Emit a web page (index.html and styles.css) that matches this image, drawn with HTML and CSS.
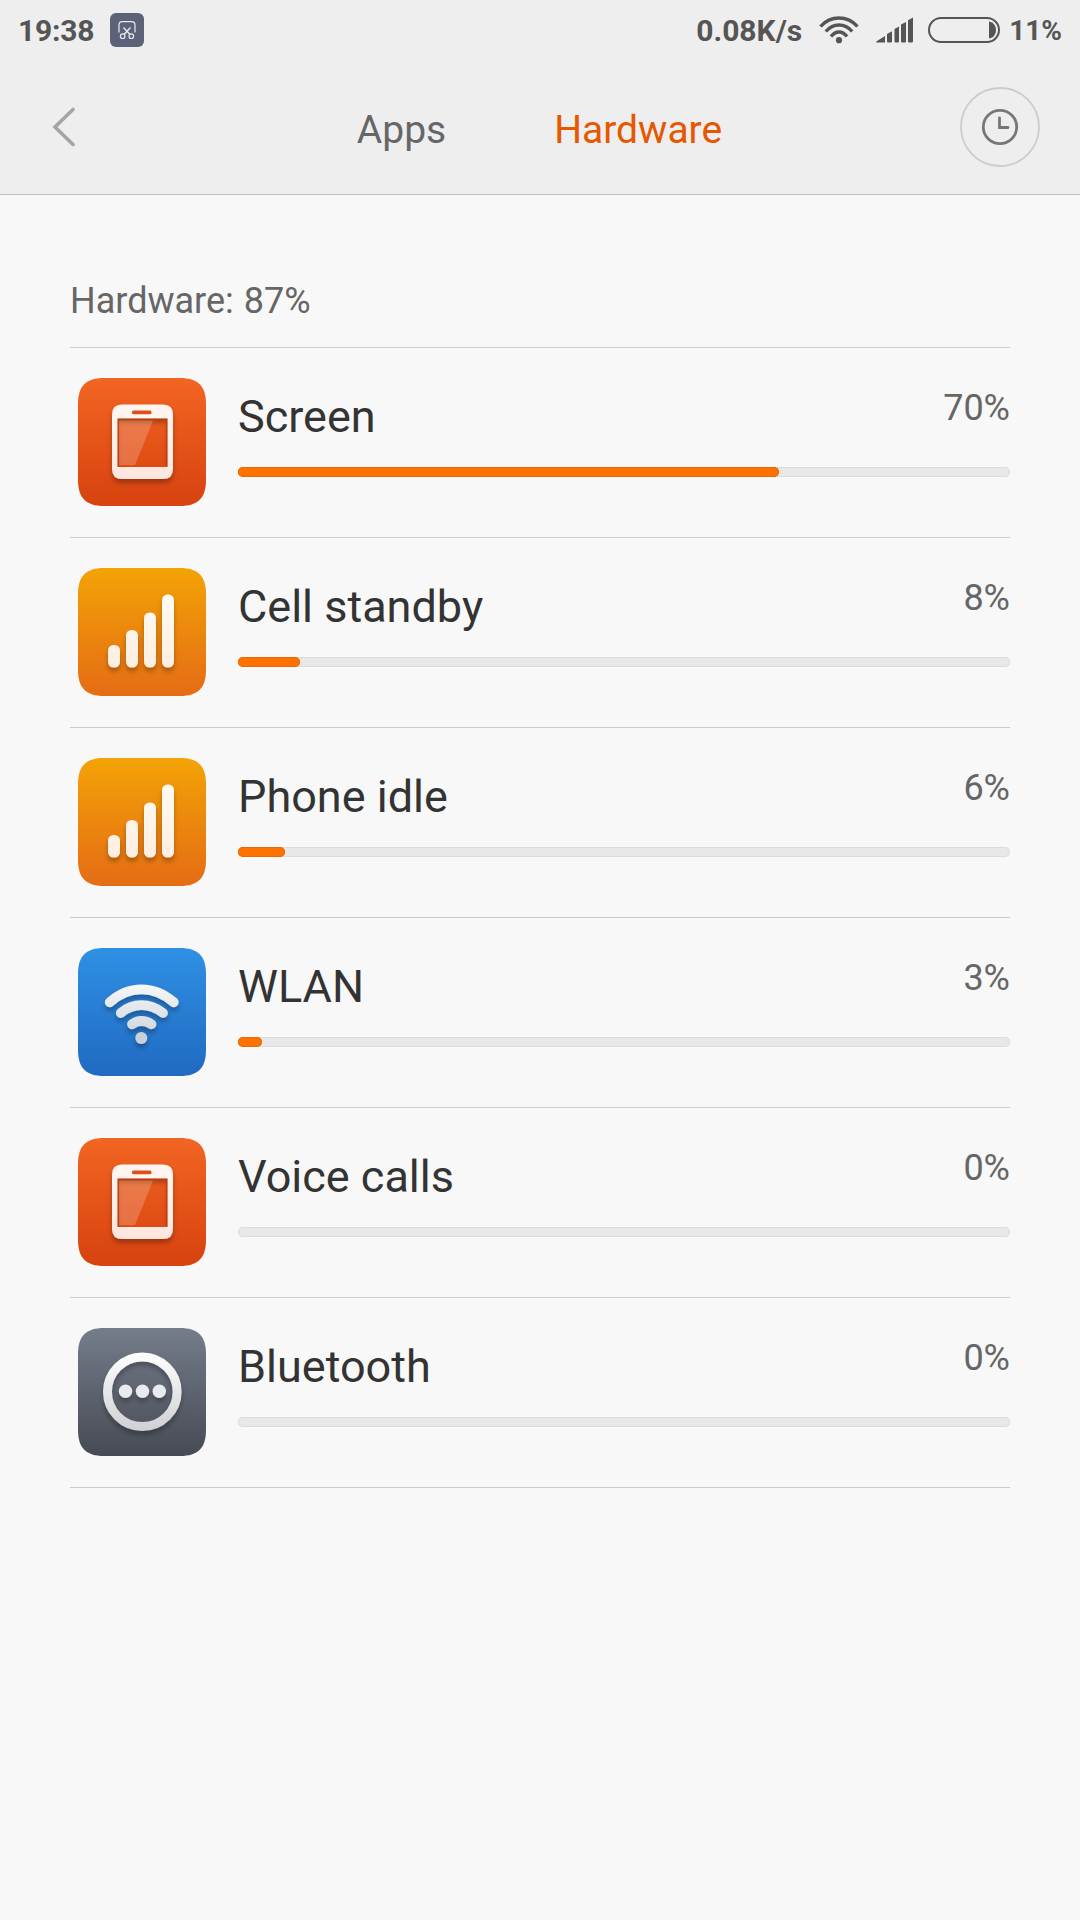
FILE: index.html
```html
<!DOCTYPE html>
<html lang="en">
<head>
    <meta charset="UTF-8">
    <title>Hardware</title>
    <link rel="stylesheet" href="styles.css">
</head>
<body>
    <!-- shared icon parts -->
    <svg class="defs" width="0" height="0">
        <defs>
            <linearGradient id="red" x1="0" y1="0" x2="0" y2="1"><stop offset="0" stop-color="#f26522"/><stop offset="1" stop-color="#d7420f"/></linearGradient>
            <linearGradient id="yellow" x1="0" y1="0" x2="0" y2="1"><stop offset="0" stop-color="#f3a306"/><stop offset="1" stop-color="#e56c15"/></linearGradient>
            <linearGradient id="blue" x1="0" y1="0" x2="0" y2="1"><stop offset="0" stop-color="#2f90e3"/><stop offset="1" stop-color="#206ac3"/></linearGradient>
            <linearGradient id="gray" x1="0" y1="0" x2="0" y2="1"><stop offset="0" stop-color="#757d8b"/><stop offset="1" stop-color="#464a53"/></linearGradient>
            <linearGradient id="phoneFill" x1="0" y1="0" x2="0" y2="1"><stop offset="0" stop-color="#fff6f2"/><stop offset="1" stop-color="#fde6de"/></linearGradient>
            <linearGradient id="barFill" gradientUnits="userSpaceOnUse" x1="0" y1="26" x2="0" y2="100"><stop offset="0" stop-color="#fffaf3"/><stop offset="1" stop-color="#fdeee0"/></linearGradient>
            <linearGradient id="wifiFill" gradientUnits="userSpaceOnUse" x1="0" y1="36" x2="0" y2="96"><stop offset="0" stop-color="#f8f8f8"/><stop offset="1" stop-color="#c6cfd7"/></linearGradient>
            <linearGradient id="ringFill" gradientUnits="userSpaceOnUse" x1="0" y1="24" x2="0" y2="103"><stop offset="0" stop-color="#ffffff"/><stop offset="1" stop-color="#cfd0d3"/></linearGradient>
            <filter id="shadow" x="-30%" y="-30%" width="160%" height="170%"><feDropShadow dx="0" dy="4" stdDeviation="2.5" flood-color="#000" flood-opacity="0.28"/></filter>
            <path id="tile" d="M26 0H102C120 0 128 8 128 26V102C128 120 120 128 102 128H26C8 128 0 120 0 102V26C0 8 8 0 26 0Z"/>
            <g id="phone">
                <use href="#tile" fill="url(#red)"/>
                <path filter="url(#shadow)" fill="url(#phoneFill)" fill-rule="evenodd" d="M44 26.500H85Q95 26.500 95 36.500V91Q95 101 85 101H44Q34 101 34 91V36.500Q34 26.500 44 26.500ZM39.500 40.500V89H89.500V40.500Z"/>
                <rect x="54" y="32.500" width="19.500" height="3.800" rx="1.500" fill="#dc4f1a"/>
                <path fill="none" stroke="#b83a0c" stroke-opacity=".55" stroke-width="1.500" d="M40.300 88.500V41.300H88.800V88.500"/>
                <path fill="#fff" fill-opacity=".2" d="M41 42.500H75L57 87H41Z"/>
            </g>
            <g id="signal">
                <use href="#tile" fill="url(#yellow)"/>
                <g filter="url(#shadow)" fill="url(#barFill)">
                    <rect x="30" y="77" width="12" height="22.500" rx="5.500"/>
                    <rect x="48" y="62" width="12" height="37.500" rx="5.500"/>
                    <rect x="66" y="44.500" width="12" height="55" rx="5.500"/>
                    <rect x="84" y="26.500" width="12" height="73" rx="5.500"/>
                </g>
            </g>
        </defs>
    </svg>

    <div class="header">
        <div class="status">
            <span class="time">19:38</span>
            <svg class="shot" width="34" height="34" viewBox="0 0 34 34">
                <rect width="34" height="34" rx="6" fill="#5c6378"/>
                <g fill="none" stroke="#e8eaf0" stroke-width="1.200">
                    <path d="M9 19.500V12Q9 8.700 12.300 8.700H21.700Q25 8.700 25 12V19.500"/>
                    <path d="M13.500 14.500L20 21.500M20.500 14.500L14 21.500" stroke-width="1.400"/>
                    <circle cx="12.700" cy="23.200" r="2.300"/>
                    <circle cx="21.300" cy="23.200" r="2.300"/>
                </g>
            </svg>
            <span class="speed">0.08K/s</span>
            <svg class="wifi" width="40" height="28" viewBox="0 0 40 28">
                <g fill="none" stroke="#555" stroke-width="3.400">
                    <path d="M1.500 10.500Q9 2 20 2T38.500 10.500"/>
                    <path d="M6.800 15.500Q12.500 9 20 9T33.200 15.500"/>
                    <path d="M12 20.500Q15.500 16 20 16T28 20.500"/>
                </g>
                <circle cx="20" cy="24.200" r="3.100" fill="#555"/>
            </svg>
            <svg class="bars" width="38" height="26" viewBox="0 0 38 26">
                <path fill="#555" d="M0 25.500Q0 24.500 1 24L9 19V25.500H0ZM11 17L16 14.200V24.500Q16 25.500 15 25.500H12Q11 25.500 11 24.500ZM18.500 12L23 9.500V24.500Q23 25.500 22 25.500H19.500Q18.500 25.500 18.500 24.500ZM25 7.500L30 5V24.500Q30 25.500 29 25.500H26Q25 25.500 25 24.500ZM32 3.300L37 .5V24.500Q37 25.500 36 25.500H33Q32 25.500 32 24.500Z"/>
            </svg>
            <svg class="battery" width="72" height="26" viewBox="0 0 72 26">
                <rect x="1" y="1" width="70" height="24" rx="12" fill="none" stroke="#555" stroke-width="2"/>
                <path fill="#555" d="M61 4.500Q68 6 68 13T61 21.500Z"/>
            </svg>
            <span class="level">11%</span>
        </div>
        <div class="nav">
            <svg class="back" width="24" height="40" viewBox="0 0 24 40">
                <path d="M21 2.500L3 20L21 37.500" fill="none" stroke="#a5a5a5" stroke-width="3.600" stroke-linecap="round"/>
            </svg>
            <div class="tabs">
                <span class="tab">Apps</span>
                <span class="tab active">Hardware</span>
            </div>
            <svg class="clock" width="80" height="80" viewBox="0 0 80 80">
                <circle cx="40" cy="40" r="39" fill="none" stroke="#ccc" stroke-width="1.800"/>
                <circle cx="40" cy="40" r="16.700" fill="none" stroke="#777" stroke-width="2.800"/>
                <path d="M39.500 31V40.500H48" fill="none" stroke="#777" stroke-width="2.800" stroke-linecap="round"/>
            </svg>
        </div>
    </div>

    <div class="content">
        <div class="title">Hardware: 87%</div>
        <ul class="list">
            <li>
                <svg class="icon" viewBox="0 0 128 128"><use href="#phone"/></svg>
                <div class="info">
                    <div class="row"><span class="name">Screen</span><span class="percent">70%</span></div>
                    <div class="progress"><div class="fill" style="width: 541px"></div></div>
                </div>
            </li>
            <li>
                <svg class="icon" viewBox="0 0 128 128"><use href="#signal"/></svg>
                <div class="info">
                    <div class="row"><span class="name">Cell standby</span><span class="percent">8%</span></div>
                    <div class="progress"><div class="fill" style="width: 62px"></div></div>
                </div>
            </li>
            <li>
                <svg class="icon" viewBox="0 0 128 128"><use href="#signal"/></svg>
                <div class="info">
                    <div class="row"><span class="name">Phone idle</span><span class="percent">6%</span></div>
                    <div class="progress"><div class="fill" style="width: 47px"></div></div>
                </div>
            </li>
            <li>
                <svg class="icon" viewBox="0 0 128 128">
                    <use href="#tile" fill="url(#blue)"/>
                    <g filter="url(#shadow)">
                        <g fill="none" stroke="url(#wifiFill)" stroke-width="9.800" stroke-linecap="round">
                            <path d="M31.700 54.300Q46 41.300 63.500 41.300T95.800 54.300"/>
                            <path d="M42.800 65Q52 57.200 63.500 57.200T85 65"/>
                            <path d="M54 76.300Q58.500 73 63.500 73T73.500 76.300"/>
                        </g>
                        <circle cx="63.300" cy="90" r="6" fill="#c9d1d8"/>
                    </g>
                </svg>
                <div class="info">
                    <div class="row"><span class="name">WLAN</span><span class="percent">3%</span></div>
                    <div class="progress"><div class="fill" style="width: 24px"></div></div>
                </div>
            </li>
            <li>
                <svg class="icon" viewBox="0 0 128 128"><use href="#phone"/></svg>
                <div class="info">
                    <div class="row"><span class="name">Voice calls</span><span class="percent">0%</span></div>
                    <div class="progress"></div>
                </div>
            </li>
            <li>
                <svg class="icon" viewBox="0 0 128 128">
                    <use href="#tile" fill="url(#gray)"/>
                    <g filter="url(#shadow)">
                        <circle cx="64.300" cy="63.700" r="34.800" fill="none" stroke="url(#ringFill)" stroke-width="9"/>
                        <g fill="#e9eaec">
                            <circle cx="47.500" cy="63.300" r="6.700"/>
                            <circle cx="64.500" cy="63.300" r="6.700"/>
                            <circle cx="81.300" cy="63.300" r="6.700"/>
                        </g>
                    </g>
                </svg>
                <div class="info">
                    <div class="row"><span class="name">Bluetooth</span><span class="percent">0%</span></div>
                    <div class="progress"></div>
                </div>
            </li>
        </ul>
    </div>
</body>
</html>
```
FILE: styles.css
```css
body {
    margin: 0;
    background-color: #f8f8f8;
    font-family: Roboto, "Liberation Sans", sans-serif;
    color: #666;
}
.defs {
    display: block;
}
.header {
    height: 194px;
    background-color: #eee;
    border-bottom: 1px solid #bfbfbf;
}
.status {
    display: flex;
    align-items: center;
    height: 60px;
    padding: 0 18px;
    font-size: 30px;
    font-weight: bold;
    line-height: 36px;
    color: #555;
}
.status span {
    padding-top: 2px;
}
.time {
    letter-spacing: -0.2px;
}
.shot {
    margin-left: 16px;
}
.speed {
    margin-left: auto;
}
.wifi {
    margin-left: 17px;
}
.bars {
    margin-left: 17px;
}
.battery {
    margin-left: 14px;
}
.level {
    margin-left: 9px;
    font-size: 28px;
}
.nav {
    display: flex;
    align-items: center;
    justify-content: space-between;
    height: 134px;
    padding: 0 40px 0 52px;
}
.tabs {
    display: flex;
    gap: 108px;
    padding: 6px 0 0 43px;
    font-size: 39px;
    line-height: 48px;
}
.active {
    color: #e65700;
}
.content {
    padding: 85px 70px 0;
}
.title {
    height: 67px;
    font-size: 36px;
    line-height: 42px;
    word-spacing: 1px;
    border-bottom: 1px solid #ccc;
}
.list {
    list-style: none;
    margin: 0;
    padding: 0;
}
.list li {
    display: flex;
    height: 159px;
    padding: 30px 0 0 8px;
    border-bottom: 1px solid #ccc;
}
.icon {
    width: 128px;
    height: 128px;
    margin-right: 32px;
}
.info {
    flex: 1;
    padding-top: 9px;
}
.row {
    display: flex;
    justify-content: space-between;
    height: 80px;
}
.name {
    padding-top: 2px;
    font-size: 45px;
    line-height: 56px;
    color: #333;
}
.percent {
    font-size: 36px;
    line-height: 42px;
}
.progress {
    height: 10px;
    border-radius: 5px;
    background-color: #e8e8e8;
    box-shadow: inset 0 0 0 1px #dcdcdc;
}
.fill {
    height: 10px;
    border-radius: 5px;
    background-color: #ff7200;
    box-shadow: inset 0 0 0 1px #e86a06;
}
```
